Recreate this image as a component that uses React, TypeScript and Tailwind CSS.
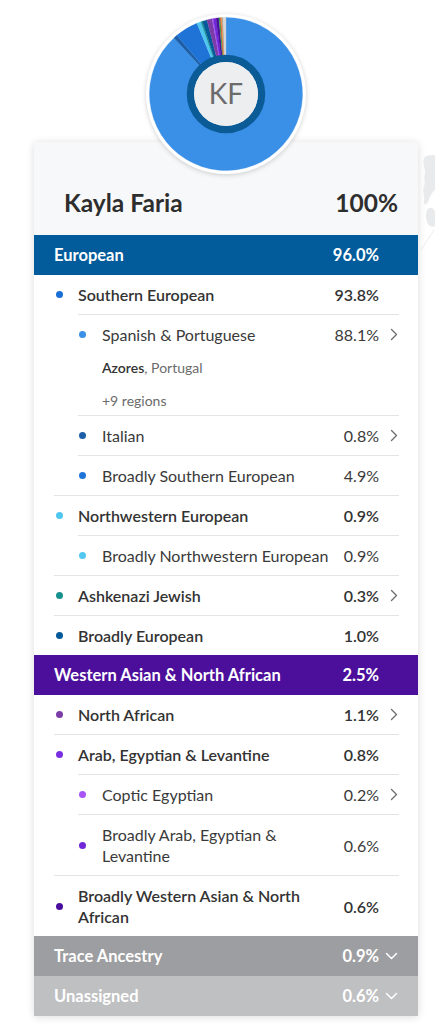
import React from 'react';

type Row = {
  name: string;
  pct: string;
  color: string;
  level: 1 | 2;
  chevron?: boolean;
  divider?: 'inner' | 'outer';
  regions?: boolean;
};

const europeanRows: Row[] = [
  { name: 'Southern European', pct: '93.8%', color: '#1a6fd6', level: 1, divider: 'inner' },
  { name: 'Spanish & Portuguese', pct: '88.1%', color: '#3a8fe6', level: 2, chevron: true, divider: 'inner', regions: true },
  { name: 'Italian', pct: '0.8%', color: '#1c5fa8', level: 2, chevron: true, divider: 'inner' },
  { name: 'Broadly Southern European', pct: '4.9%', color: '#1f73d6', level: 2, divider: 'outer' },
  { name: 'Northwestern European', pct: '0.9%', color: '#4fc6ee', level: 1, divider: 'inner' },
  { name: 'Broadly Northwestern European', pct: '0.9%', color: '#52c8f0', level: 2, divider: 'outer' },
  { name: 'Ashkenazi Jewish', pct: '0.3%', color: '#17918f', level: 1, chevron: true, divider: 'outer' },
  { name: 'Broadly European', pct: '1.0%', color: '#045a99', level: 1 },
];

const wanaRows: Row[] = [
  { name: 'North African', pct: '1.1%', color: '#7b3ca8', level: 1, chevron: true, divider: 'outer' },
  { name: 'Arab, Egyptian & Levantine', pct: '0.8%', color: '#7a2ee2', level: 1, divider: 'inner' },
  { name: 'Coptic Egyptian', pct: '0.2%', color: '#a855f7', level: 2, chevron: true, divider: 'inner' },
  { name: 'Broadly Arab, Egyptian & Levantine', pct: '0.6%', color: '#7127d8', level: 2, divider: 'outer' },
  { name: 'Broadly Western Asian & North African', pct: '0.6%', color: '#4a0e9e', level: 1 },
];

const segments: [number, string][] = [
  [88.1, '#3a8fe6'],
  [0.8, '#1c5fa8'],
  [4.9, '#1f73d6'],
  [0.9, '#4fc6ee'],
  [0.3, '#17918f'],
  [1.0, '#045a99'],
  [1.1, '#7b3ca8'],
  [0.2, '#a855f7'],
  [0.6, '#7127d8'],
  [0.6, '#4a0e9e'],
  [0.3, '#3aa64c'],
  [0.2, '#e0463c'],
  [0.2, '#f0a030'],
  [0.2, '#9a9a9a'],
  [0.6, '#d6d6d6'],
];

function pt(r: number, deg: number) {
  const a = (deg * Math.PI) / 180;
  return `${(80 + r * Math.sin(a)).toFixed(3)} ${(80 - r * Math.cos(a)).toFixed(3)}`;
}

function arc(r0: number, r1: number, a0: number, a1: number) {
  const large = a1 - a0 > 180 ? 1 : 0;
  return `M ${pt(r1, a0)} A ${r1} ${r1} 0 ${large} 1 ${pt(r1, a1)} L ${pt(r0, a1)} A ${r0} ${r0} 0 ${large} 0 ${pt(r0, a0)} Z`;
}

const Donut: React.FC = () => {
  let start = 0;
  return (
    <div className="relative z-10 -mb-[32px] mt-[14px] h-[160px] w-[160px] rounded-full bg-white shadow-[0_1px_5px_rgba(0,0,0,0.18)]">
      <svg width="160" height="160" viewBox="0 0 160 160">
        {segments.map(([p, c], i) => {
          const a0 = start;
          const a1 = start + p * 3.6;
          start = a1;
          return <path key={i} d={arc(38, 76.5, a0, a1)} fill={c} stroke={c} strokeWidth="0.3" />;
        })}
        <circle cx="80" cy="80" r="35.5" fill="none" stroke="#0b5b97" strokeWidth="7.5" />
        <circle cx="80" cy="80" r="32" fill="#eceef0" />
        <text x="80" y="90" textAnchor="middle" fontSize="28" fill="#6b6b6b" fontFamily="Lato, 'Liberation Sans', sans-serif">
          KF
        </text>
      </svg>
    </div>
  );
};

const ChevronRight: React.FC = () => (
  <svg width="8" height="13" viewBox="0 0 8 13" fill="none">
    <path d="M1.5 1.5 L6.5 6.5 L1.5 11.5" stroke="#6b6b6b" strokeWidth="1.3" strokeLinecap="round" strokeLinejoin="round" />
  </svg>
);

const ChevronDown: React.FC = () => (
  <svg width="13" height="8" viewBox="0 0 13 8" fill="none">
    <path d="M1.5 1.5 L6.5 6.5 L11.5 1.5" stroke="#ffffff" strokeWidth="1.5" strokeLinecap="round" strokeLinejoin="round" />
  </svg>
);

const AncestryRow: React.FC<{ row: Row }> = ({ row }) => {
  const top = row.level === 1;
  return (
    <>
      <div className="flex items-start py-[9px] pr-[20px]">
        <div className={top ? 'flex min-w-0 flex-1 items-center self-stretch' : 'flex min-w-0 flex-1 flex-col self-stretch'}>
          <div className="flex min-w-0 flex-1 items-center">
            <span
              className={top ? 'ml-[22px] mr-[15px] h-[7px] w-[7px] shrink-0 rounded-full' : 'ml-[45px] mr-[16px] h-[7px] w-[7px] shrink-0 rounded-full'}
              style={{ backgroundColor: row.color }}
            />
            <span
              className={
                top
                  ? 'min-w-0 flex-1 text-[16px] font-semibold leading-[21px] text-[#333333]'
                  : 'min-w-0 flex-1 text-[16px] leading-[21px] text-[#3a3a3a]'
              }
            >
              {row.name}
            </span>
          </div>
          {row.regions && (
            <div className="pl-[68px] text-[14px] leading-[20px] text-[#6b6b6b]">
              <div className="mt-[13px]">
                <span className="font-semibold text-[#333333]">Azores</span>, Portugal
              </div>
              <div className="mt-[13px] mb-[-5px]">+9 regions</div>
            </div>
          )}
        </div>
        <div className={row.regions ? 'flex h-[21px] items-center' : 'flex items-center self-stretch'}>
          <span
            className={
              top
                ? 'w-[48px] text-right text-[16px] font-semibold leading-[21px] text-[#333333]'
                : 'w-[48px] text-right text-[16px] leading-[21px] text-[#3a3a3a]'
            }
          >
            {row.pct}
          </span>
          <span className="flex w-[19px] justify-end">{row.chevron && <ChevronRight />}</span>
        </div>
      </div>
      {row.divider === 'inner' && <div className="ml-[44px] mr-[19px] h-px bg-[#e3e4e6]" />}
      {row.divider === 'outer' && <div className="ml-[20px] mr-[19px] h-px bg-[#e3e4e6]" />}
    </>
  );
};

const Bar: React.FC<{ name: string; pct: string; bg: string; down?: boolean }> = ({ name, pct, bg, down }) => (
  <div className={`flex h-[40px] items-center pl-[20px] pr-[20px] ${bg}`}>
    <span className="flex-1 text-[16.5px] font-bold text-white">{name}</span>
    <span className="text-right text-[16.5px] font-bold text-white">{pct}</span>
    <span className="flex w-[19px] justify-end">{down && <ChevronDown />}</span>
  </div>
);

const App: React.FC = () => {
  return (
    <div className="flex min-h-screen bg-white font-['Lato','Liberation_Sans',sans-serif]">
      <div className="ml-[34px] flex w-[384px] flex-col items-center">
        <Donut />
        <div className="w-full bg-white shadow-[0_1px_8px_rgba(0,0,0,0.14)]">
          <div className="flex h-[93px] items-start justify-between bg-[#f7f8f9] pl-[30px] pr-[20px] pt-[46px]">
            <h1 className="text-[24.5px] font-bold leading-[30px] text-[#2e2e2e]">Kayla Faria</h1>
            <span className="text-[24.5px] font-bold leading-[30px] text-[#2e2e2e]">100%</span>
          </div>
          <Bar name="European" pct="96.0%" bg="bg-[#025c9b]" />
          {europeanRows.map((r) => (
            <AncestryRow key={r.name} row={r} />
          ))}
          <Bar name="Western Asian & North African" pct="2.5%" bg="bg-[#4b0f9c]" />
          {wanaRows.map((r) => (
            <AncestryRow key={r.name} row={r} />
          ))}
          <Bar name="Trace Ancestry" pct="0.9%" bg="bg-[#9d9ea1]" down />
          <Bar name="Unassigned" pct="0.6%" bg="bg-[#bfc0c2]" down />
        </div>
      </div>
      <div className="flex-1 overflow-hidden pt-[150px]">
        <svg width="17" height="110" viewBox="0 0 17 110">
          <path d="M6 8 C9 4 14 6 17 5 L17 40 C14 42 12 46 10 52 C8 56 5 55 6 50 C7 45 4 42 6 36 C8 32 5 28 7 24 C8 20 4 14 6 8 Z" fill="#e9eaeb" />
          <path d="M9 60 C12 56 16 58 17 62 L17 76 C14 78 10 76 9 72 C8 68 7 64 9 60 Z" fill="#e9eaeb" />
          <path d="M16 80 L3 100" stroke="#ececec" strokeWidth="1" />
        </svg>
      </div>
    </div>
  );
};

export default App;
